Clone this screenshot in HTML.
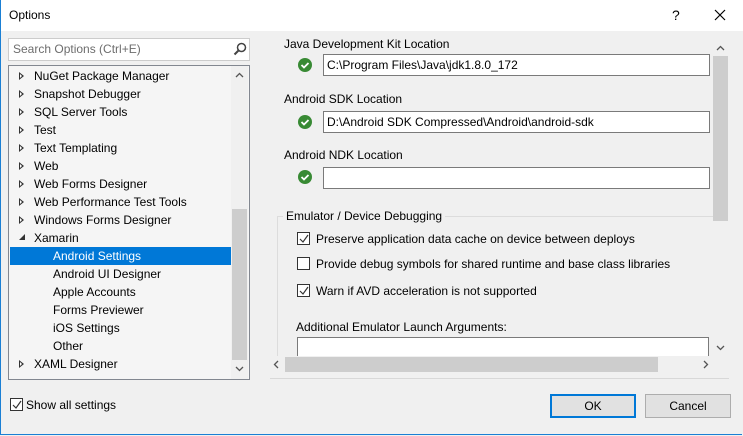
<html><head><style>
body{margin:0;width:743px;height:436px;overflow:hidden;background:#f0f0f0;font-family:"Liberation Sans",sans-serif;font-size:12px;color:#000;position:relative}
.a{position:absolute}
.win{position:absolute;left:0;top:0;width:741px;height:434px;border:1px solid #1a7fd4;border-top:none;border-right:none}
.title{left:0;top:0;width:743px;height:31px;background:#fff}
.row{position:absolute;left:10px;width:221px;height:18px;line-height:18px;white-space:nowrap}
.tri{position:absolute;left:9px;top:5px;width:0;height:0;border-top:4px solid transparent;border-bottom:4px solid transparent;border-left:5px solid #333}
.tri::after{content:"";position:absolute;left:-4px;top:-2px;border-top:2px solid transparent;border-bottom:2px solid transparent;border-left:2px solid #fff}
.inp{position:absolute;background:#fff;border:1px solid #7a7a7a;line-height:20px;padding-left:3px;box-sizing:border-box;height:22px}
.ok{position:absolute;width:14px;height:14px;border-radius:50%;background:#388a34}
.cb{position:absolute;width:11px;height:11px;border:1px solid #333;background:#fff}
.btn{position:absolute;height:24px;line-height:22px;text-align:center;box-sizing:border-box;background:#e1e1e1;border:1px solid #adadad}
</style></head><body>
<div class="a title"></div>
<div class="win"></div>
<div class="a" style="left:9px;top:8px;font-size:12px">Options</div>
<div class="a" style="left:672px;top:7px;font-size:14px">?</div>
<svg class="a" style="left:714px;top:9px" width="12" height="12"><path d="M1 1L11 11M11 1L1 11" stroke="#000" stroke-width="1.2"/></svg>

<div class="a" style="left:8px;top:38px;width:240px;height:21px;background:#fff;border:1px solid #ccc"></div>
<div class="a" style="left:13px;top:42px;color:#6d6d6d">Search Options (Ctrl+E)</div>
<svg class="a" style="left:233px;top:42px" width="14" height="14"><circle cx="8.5" cy="5.5" r="4" fill="none" stroke="#444" stroke-width="1.5"/><path d="M6 8L1.5 12.5" stroke="#444" stroke-width="2"/></svg>

<div class="a" style="left:8px;top:65px;width:240px;height:313px;background:#f5f5f5;border:1px solid #828790"></div>
<div class="a" style="left:231px;top:66px;width:17px;height:313px;background:#f0f0f0"></div>
<div class="a" style="left:232px;top:209px;width:15px;height:151px;background:#cdcdcd"></div>
<svg class="a" style="left:235px;top:72px" width="9" height="6"><path d="M1 5L4.5 1.5L8 5" fill="none" stroke="#555" stroke-width="1.3"/></svg>
<svg class="a" style="left:235px;top:366px" width="9" height="6"><path d="M1 1L4.5 4.5L8 1" fill="none" stroke="#555" stroke-width="1.3"/></svg>

<div class="row" style="top:67px"><span class="tri"></span><span style="margin-left:24px">NuGet Package Manager</span></div>
<div class="row" style="top:85px"><span class="tri"></span><span style="margin-left:24px">Snapshot Debugger</span></div>
<div class="row" style="top:103px"><span class="tri"></span><span style="margin-left:24px">SQL Server Tools</span></div>
<div class="row" style="top:121px"><span class="tri"></span><span style="margin-left:24px">Test</span></div>
<div class="row" style="top:139px"><span class="tri"></span><span style="margin-left:24px">Text Templating</span></div>
<div class="row" style="top:157px"><span class="tri"></span><span style="margin-left:24px">Web</span></div>
<div class="row" style="top:175px"><span class="tri"></span><span style="margin-left:24px">Web Forms Designer</span></div>
<div class="row" style="top:193px"><span class="tri"></span><span style="margin-left:24px">Web Performance Test Tools</span></div>
<div class="row" style="top:211px"><span class="tri"></span><span style="margin-left:24px">Windows Forms Designer</span></div>
<div class="row" style="top:229px"><svg class="a" style="left:9px;top:5px" width="7" height="7"><path d="M6 0L6 6L0 6Z" fill="#333"/></svg><span style="margin-left:24px">Xamarin</span></div>
<div class="row" style="top:247px;background:#0078d7;color:#fff"><span style="margin-left:43px">Android Settings</span></div>
<div class="row" style="top:265px"><span style="margin-left:43px">Android UI Designer</span></div>
<div class="row" style="top:283px"><span style="margin-left:43px">Apple Accounts</span></div>
<div class="row" style="top:301px"><span style="margin-left:43px">Forms Previewer</span></div>
<div class="row" style="top:319px"><span style="margin-left:43px">iOS Settings</span></div>
<div class="row" style="top:337px"><span style="margin-left:43px">Other</span></div>
<div class="row" style="top:355px"><span class="tri"></span><span style="margin-left:24px">XAML Designer</span></div>

<div class="cb" style="left:10px;top:398px"></div>
<svg class="a" style="left:11px;top:399px" width="12" height="12"><path d="M2 6L5 9L10 2" fill="none" stroke="#333" stroke-width="1.2"/></svg>
<div class="a" style="left:26px;top:398px">Show all settings</div>

<div class="a" style="left:284px;top:37px">Java Development Kit Location</div>
<div class="ok" style="left:298px;top:58px"></div>
<div class="inp" style="left:323px;top:54px;width:387px">C:\Program Files\Java\jdk1.8.0_172</div>
<div class="a" style="left:284px;top:92px">Android SDK Location</div>
<div class="ok" style="left:298px;top:115px"></div>
<div class="inp" style="left:323px;top:111px;width:387px">D:\Android SDK Compressed\Android\android-sdk</div>
<div class="a" style="left:284px;top:148px">Android NDK Location</div>
<div class="ok" style="left:298px;top:170px"></div>
<div class="inp" style="left:323px;top:167px;width:387px"></div>
<svg class="a" style="left:298px;top:58px" width="14" height="130"><g fill="none" stroke="#fff" stroke-width="1.8"><path d="M3.5 7L6 9.5L10.5 5"/><path d="M3.5 64L6 66.5L10.5 62"/><path d="M3.5 119L6 121.5L10.5 117"/></g></svg>

<div class="a" style="left:277px;top:216px;width:436px;height:150px;border-left:1px solid #dcdcdc;border-top:1px solid #dcdcdc"></div>
<div class="a" style="left:283px;top:209px;background:#f0f0f0;padding:0 3px">Emulator / Device Debugging</div>
<div class="cb" style="left:297px;top:232px"></div>
<div class="cb" style="left:297px;top:257px"></div>
<div class="cb" style="left:297px;top:284px"></div>
<svg class="a" style="left:298px;top:233px" width="12" height="64"><g fill="none" stroke="#333" stroke-width="1.2"><path d="M2 6L5 9L10 2"/><path d="M2 58L5 61L10 54"/></g></svg>
<div class="a" style="left:316px;top:232px">Preserve application data cache on device between deploys</div>
<div class="a" style="left:316px;top:257px">Provide debug symbols for shared runtime and base class libraries</div>
<div class="a" style="left:316px;top:284px">Warn if AVD acceleration is not supported</div>
<div class="a" style="left:296px;top:320px">Additional Emulator Launch Arguments:</div>
<div class="a" style="left:297px;top:337px;width:410px;height:20px;background:#fff;border:1px solid #7a7a7a;border-bottom:none"></div>

<div class="a" style="left:713px;top:38px;width:15px;height:318px;background:#f0f0f0"></div>
<div class="a" style="left:713px;top:56px;width:15px;height:165px;background:#cdcdcd"></div>
<svg class="a" style="left:716px;top:45px" width="9" height="6"><path d="M1 5L4.5 1.5L8 5" fill="none" stroke="#555" stroke-width="1.3"/></svg>
<svg class="a" style="left:716px;top:345px" width="9" height="6"><path d="M1 1L4.5 4.5L8 1" fill="none" stroke="#555" stroke-width="1.3"/></svg>
<div class="a" style="left:270px;top:356px;width:443px;height:17px;background:#f0f0f0"></div>
<div class="a" style="left:285px;top:357px;width:373px;height:15px;background:#cdcdcd"></div>
<svg class="a" style="left:273px;top:360px" width="6" height="9"><path d="M5 1L1.5 4.5L5 8" fill="none" stroke="#555" stroke-width="1.3"/></svg>
<svg class="a" style="left:703px;top:360px" width="6" height="9"><path d="M1 1L4.5 4.5L1 8" fill="none" stroke="#555" stroke-width="1.3"/></svg>
<div class="a" style="left:270px;top:378px;width:459px;height:1px;background:#d8d8d8"></div>

<div class="btn" style="left:550px;top:394px;width:86px;border:2px solid #0078d7;line-height:20px">OK</div>
<div class="btn" style="left:645px;top:394px;width:86px">Cancel</div>
</body></html>
